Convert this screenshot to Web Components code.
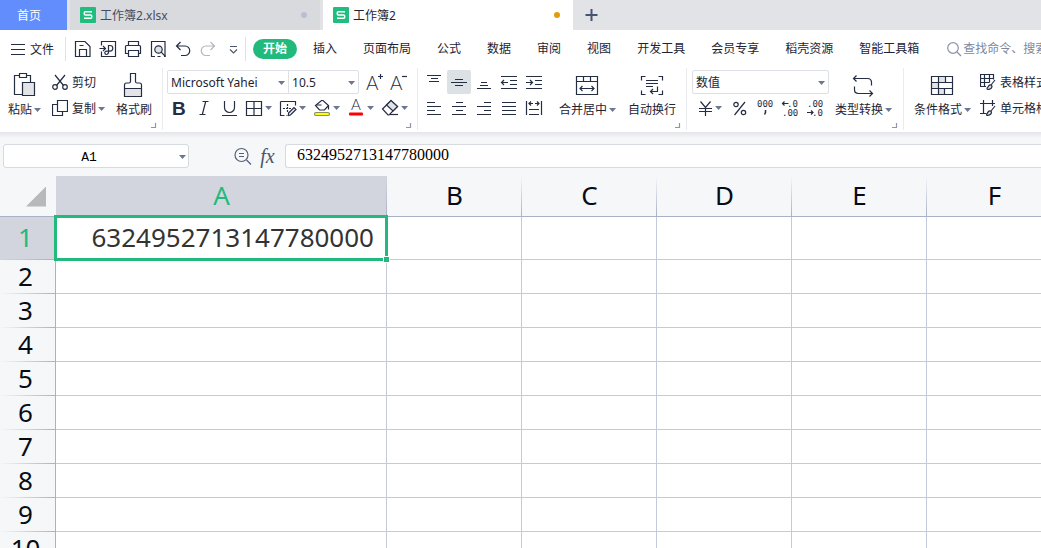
<!DOCTYPE html>
<html lang="zh-CN">
<head>
<meta charset="utf-8">
<title>工作簿2</title>
<style>
html, body { margin: 0; height: 100%; overflow: hidden; }
body {
  font: 12px/18px "Noto Sans", "Noto Sans CJK SC", sans-serif;
  color: #1d2433;
  --ink: #252d42;
  --caret: #6c7892;
  --green: #21ba7c;
}
</style>
</head>
<body>
<wps-app></wps-app>
<script>
/* Registers an element; setup fills in the cloned template before it goes live. */
const define = (name, html, setup) => {
  const template = document.createElement('template');
  template.innerHTML = html;
  customElements.define(name, class extends HTMLElement {
    connectedCallback() {
      if (this.shadowRoot) return;
      const content = template.content.cloneNode(true);
      if (setup) setup.call(this, content);
      this.attachShadow({ mode: 'open' }).append(content);
    }
  });
};

/* ---------- icons: 24px for small tools, 30px for large ones ---------- */
const ICONS = {
  menu: [16, '<path d="M1 3.5h14M1 8.5h14M1 13.5h14"/>'],
  save: [24, '<path d="M4.500 4.500h9.500l5 5v10h-14.500zM8.500 19v-6.500h7v6.500M8.500 8.500h4"/>'],
  pdf: [24, '<path d="M5.500 8.500v-4h14v15h-14v-5M3.500 11.500h6M7 9l2.500 2.500-2.500 2.500M12.500 16.500v-8h1.500a2.800 2.800 0 0 1 0 5.600h-3.500a1.700 1.700 0 1 0 1.700 1.700"/>'],
  print: [24, '<path d="M7.500 9v-4.500h10v4.500M7.500 16.500h-3v-7q0-1 1-1h13q1 0 1 1v7h-2M7.500 13.500h10v6h-10z"/>'],
  preview: [24, '<path d="M9 19.500h-3.500v-15h13.500v15h-1M14.500 19.500h-3"/><circle cx="12.500" cy="12.500" r="3.700" fill="#dfe2e8"/><path d="M15.200 15.200l4.300 4.300"/>'],
  undo: [24, '<path d="M9.500 5l-4 4 4 4M5.500 9h8.500a4.500 4.500 0 0 1 0 9.500h-4"/>'],
  redo: [24, '<path stroke="#b2b6be" d="M14.500 5l4 4-4 4M18.500 9h-8.500a4.500 4.500 0 0 0 0 9.500h4"/>'],
  more: [24, '<path stroke="#4e586c" d="M9 9.500h7M9 12.500l3.500 3.500 3.500-3.500"/>'],
  search: [16, '<g stroke="#8993aa"><circle cx="7" cy="7" r="5.300"/><path d="M11 11l4 4"/></g>'],
  plus: [24, '<path stroke="#46556f" stroke-width="2" d="M6.500 12h12M12.500 6v12"/>'],
  sheet: [16, '<rect width="16" height="16" rx="1" fill="#20bd7e" stroke="none"/><path stroke="#fff" stroke-width="1.500" d="M12 4.700h-6.700q-1 0-1 1v1.300q0 1 1 1h5.400q1 0 1 1v1.300q0 1-1 1h-6.700"/>'],
  cut: [16, '<path d="M3 1l8.500 10.500M13 1l-8.500 10.500"/><circle cx="3" cy="13" r="2.300"/><circle cx="13" cy="13" r="2.300"/>'],
  copy: [16, '<path d="M5.500 .5h10v11h-10zM5 4.500h-4.500v11h10v-4"/>'],
  paste: [30, '<path d="M10 5.500h-4.500v19h8M18 5.500h3.500v7M10.500 3.500h7v4h-7z"/><path fill="#e3e4e8" d="M13.500 12.500h12v13h-12z"/>'],
  brush: [30, '<path fill="#e3e4e8" stroke="none" d="M5.500 18.500h17v8h-17z"/><path d="M11.500 3.500h5v8q0 1.500 1.500 1.500h2.500q2 0 2 2v11.500h-17v-11.500q0-2 2-2h2.500q1.500 0 1.500-1.500zM5.500 18.500h17"/>'],
  grow: [24, '<text x="3" y="20" font-size="19" class="thin">A</text><path d="M15 6.500h5M17.500 4v5"/>'],
  shrink: [24, '<text x="3" y="20" font-size="19" class="thin">A</text><path d="M15 6.500h5"/>'],
  bold: [24, '<text x="5" y="19" font-size="19" font-weight="700">B</text>'],
  italic: [24, '<path d="M10.500 5.500h6M7.500 18.500h6M13.700 5.500l-3.400 13"/>'],
  underline: [24, '<path d="M5 19.500h15M7.500 5v6.500a5 5 0 0 0 10 0v-6.500"/>'],
  border: [24, '<path d="M4.500 5.500h15v14h-15zM12 5.500v14M4.500 12.500h15"/>'],
  drawborder: [24, '<path d="M4.500 5.500v14h4M4.500 5.500h15v4M10.500 19.500h1"/><path stroke-dasharray="2 1" d="M7 12.500h8M11.500 8v8"/><path fill="#e3e4e8" d="M12.500 19.500v-2.500l5.500-5.500 2 2-5.500 5.500z"/>'],
  fill: [24, '<path d="M5.500 9.500l6-5h1.500l5.500 5-4 4.500h-5z" fill="#fff"/><path d="M18.500 9.500v4M6.500 9h5"/><rect x="4.500" y="16.500" width="15" height="3" rx="1.500" fill="#ff0" stroke="#888f60"/>'],
  color: [24, '<text x="7" y="14" font-size="15" class="thin">A</text><rect x="5" y="16.500" width="14" height="3" rx="1" fill="#f00" stroke="none"/>'],
  eraser: [24, '<path d="M4.500 13l8.500-8.500 6.500 6-8.500 8.500h-1z"/><path fill="#e0e3e9" d="M8.500 9l4.500-4.500 6.500 6-4.500 4.500z"/><path d="M12 18.500h8"/>'],
  top: [24, '<path d="M5 5.500h14M9 8.500h7M7 11.500h10"/>'],
  middle: [24, '<path d="M8 9.500h8M4 12.500h16M8 15.500h8"/>'],
  bottom: [24, '<path d="M9 12.500h6M8 15.500h8M5 18.500h14"/>'],
  outdent: [24, '<path d="M4 6.500h16M13 10.500h7M13 14.500h7M4 18.500h16M5 12.500h6M7 10l-2.500 2.500 2.500 2.500"/>'],
  indent: [24, '<path d="M4 6.500h16M13 10.500h7M13 14.500h7M4 18.500h16M4 12.500h6M8 10l2.500 2.500-2.500 2.500"/>'],
  left: [24, '<path d="M5 6.500h8M5 10.500h14M5 14.500h8M5 18.500h14"/>'],
  center: [24, '<path d="M9 6.500h7M5 10.500h14M9 14.500h7M5 18.500h14"/>'],
  right: [24, '<path d="M12 6.500h7M5 10.500h14M12 14.500h7M5 18.500h14"/>'],
  justify: [24, '<path d="M5 6.500h14M5 10.500h14M5 14.500h14M5 18.500h14"/>'],
  spread: [24, '<path d="M4.500 5v14M19.500 5v14M7 13.500h10M7 18.500h10M7 7.500h4M13 7.500h4M9 5.500l-2 2 2 2M15 5.500l2 2-2 2"/>'],
  merge: [30, '<path d="M4.500 6.500h21v18h-21zM4.500 11.500h21M11.500 6.500v5M18.500 6.500v5M8 18.500h14M10.500 16l-2.500 2.500 2.500 2.500M19.500 16l2.500 2.500-2.500 2.500"/>'],
  wrap: [30, '<path d="M8.500 6.500h-4v4M21.500 6.500h4v4M8.500 24.500h-4v-4M21.500 24.500h4v-4M9 10.500h12M9 13.500h12M9 16.500h7M20.500 16.500v5h-7M16 19l-2.500 2.500 2.500 2.500"/>'],
  yen: [24, '<path d="M8.500 5.500l5 6 5-6M7 12.500h13M7 15.500h13M13.500 12v8"/>'],
  percent: [24, '<circle cx="8" cy="8.500" r="2.200"/><circle cx="15.500" cy="16.500" r="2.200"/><path d="M17 6l-10.500 13"/>'],
  comma: [24, '<text x="4" y="11" font-size="9" class="mono">000</text><path stroke-width="1.500" d="M12.500 14v2.500l-1 2"/>'],
  decinc: [24, '<path d="M4.500 7.500h6M6.500 5.500l-2 2 2 2"/><text x="9" y="11" font-size="9" class="mono">.0</text><text x="4" y="20" font-size="9" class="mono">.00</text>'],
  decdec: [24, '<text x="4" y="11" font-size="9" class="mono">.00</text><path d="M4 16.500h6M8 14.500l2 2-2 2"/><text x="9" y="20" font-size="9" class="mono">.0</text>'],
  convert: [30, '<path d="M8.500 5.500l-3 3 3 3M5.500 8.500h14q4 0 4 4v3M21.500 20.500l3 3-3 3M24.500 23.500h-14q-4 0-4-4v-3"/>'],
  cond: [30, '<path fill="#e3e4e8" stroke="none" d="M11.500 6.500h7v6h-7zM5 12.500h6v6h-6zM11 18.500h6v6h-6z"/><path d="M4.500 6.500h21v18h-21zM4.500 12.500h21M4.500 18.500h21M11.500 6.500v18M18.500 6.500v6M17.500 18.500v6"/>'],
  tstyle: [16, '<path d="M6 12.500h-5.500v-12h13v5M.5 4.500h13M.5 8.500h9M4.500 .5v12M9.500 .5v8"/><path fill="#dfe2e8" d="M8 15.500q-2-1 0-2.500 1-2.500 3-2l1 1q0 3-4 3.500zM11 11l4-5"/>'],
  cstyle: [16, '<path d="M0 3.500h15M3.500 0v13.500M0 13.500h6M12.500 0v6"/><path fill="#dfe2e8" d="M7 15.500q-1-1 .5-2.500 1-2.500 3-2l1 1q0 3-4.500 3.500zM11 11l4-5"/>'],
  lens: [24, '<g stroke="#556079"><circle cx="10.500" cy="11" r="6.500"/><path d="M15.500 16l4.500 4.500M8 9.500h5M8 12.500h5"/></g>'],
  corner: [6, '<path stroke="#8c96ad" d="M0 4.500h4.500v-4.500"/>']
};
define('wps-icon', `<style>
:host { display: block; flex: none; color: var(--ink); }
svg { display: block; fill: none; stroke: currentColor; stroke-width: 1.2; }
text { fill: currentColor; stroke: none; font-family: "Liberation Sans", sans-serif; }
.thin { font-family: Lato, sans-serif; font-weight: 300; }
.mono { font-family: "DejaVu Sans Mono", monospace; }
</style><svg aria-hidden="true"></svg>`, function (content) {
  const [size, body] = ICONS[this.getAttribute('name')];
  const svg = content.querySelector('svg');
  svg.setAttribute('width', size);
  svg.setAttribute('height', size);
  svg.setAttribute('viewBox', `0 0 ${size} ${size}`);
  svg.innerHTML = body;
});

define('wps-caret', `<style>
:host { display: block; flex: none; width: 7px; height: 4px; margin: 0 -1px; background: var(--caret); clip-path: polygon(0 0, 100% 0, 50% 100%); }
</style>`);

/* ---------- buttons ---------- */
define('wps-tool', `<style>
:host { display: block; flex: none; }
button { display: flex; align-items: center; height: 24px; padding: 0; border: 0; border-radius: 2px; background: none; color: inherit; font: inherit; }
:host([split]) button { padding-right: 4px; }
:host([pressed]) button { background: #dce1e6; }
</style>
<button type="button"><wps-icon></wps-icon></button>`, function (content) {
  const button = content.querySelector('button');
  content.querySelector('wps-icon').setAttribute('name', this.getAttribute('icon'));
  button.setAttribute('aria-label', this.getAttribute('label'));
  if (this.hasAttribute('split')) button.append(document.createElement('wps-caret'));
});
const labelled = function (content) {
  content.querySelector('wps-icon').setAttribute('name', this.getAttribute('icon'));
  if (this.hasAttribute('split')) content.querySelector('span').append(document.createElement('wps-caret'));
};
define('wps-row-button', `<style>
:host { display: block; flex: none; }
button { display: flex; align-items: center; gap: 4px; height: 24px; padding: 0; border: 0; background: none; color: inherit; font: inherit; white-space: nowrap; }
span { display: flex; align-items: center; gap: 3px; padding-top: 2px; }
</style>
<button type="button"><wps-icon></wps-icon><span><slot></slot></span></button>`, labelled);
define('wps-big-button', `<style>
:host { display: block; flex: none; }
button { display: flex; flex-direction: column; align-items: center; padding: 0; border: 0; background: none; color: inherit; font: inherit; white-space: nowrap; }
span { display: flex; align-items: center; gap: 3px; padding-top: 1px; }
</style>
<button type="button"><wps-icon></wps-icon><span><slot></slot></span></button>`, labelled);

define('wps-select', `<style>
:host { display: block; position: relative; }
select { appearance: none; display: block; width: 100%; height: 22px; padding: 1px 12px 0 3px; border: 0; background: none; color: inherit; font: inherit; }
wps-caret { position: absolute; right: 4px; top: 10px; pointer-events: none; }
</style>
<select></select><wps-caret></wps-caret>`, function (content) {
  const select = content.querySelector('select');
  select.setAttribute('aria-label', this.getAttribute('label'));
  select.add(new Option(this.getAttribute('value')));
});

/* ---------- document tabs ---------- */
define('wps-tab', `<style>
:host { display: flex; align-items: center; flex: 0 1 250px; min-width: 0; background: #d9dade; color: #454d5c; --dot: #b7c0d3; }
:host([active]) { background: #fff; color: #1d2433; --dot: #e39a0b; }
button { display: flex; flex: 1; align-items: center; gap: 4px; height: 30px; padding: 0 13px 0 10px; border: 0; background: none; color: inherit; font: inherit; }
span { padding-top: 2px; }
i { width: 6px; height: 6px; margin-left: auto; border-radius: 50%; background: var(--dot); }
</style>
<button type="button" role="tab"><wps-icon name="sheet"></wps-icon><span><slot></slot></span><i></i></button>`);
define('wps-tabs', `<style>
:host { display: flex; gap: 3px; height: 30px; background: #e2e3e7; }
.home { padding: 2px 26px 0 17px; border: 0; background: #618dfd; color: #fff; font: inherit; }
wps-tool { padding: 3px; }
</style>
<button class="home" type="button">首页</button>
<wps-tab>工作簿2.xlsx</wps-tab>
<wps-tab active>工作簿2</wps-tab>
<wps-tool icon="plus" label="新建"></wps-tool>`);

/* ---------- menu bar ---------- */
define('wps-menubar', `<style>
:host { display: flex; align-items: center; height: 37px; padding-left: 10px; background: #fff; overflow: hidden; }
.quick { display: flex; gap: 1px; padding: 0 0 0 5px; border-left: 1px solid #dfe1e6; border-right: 1px solid #dfe1e6; margin-left: 11px; }
nav { display: flex; flex: none; align-items: center; gap: 26px; padding: 1px 0 0 17px; }
a { color: inherit; text-decoration: none; white-space: nowrap; }
a.on { margin: 0 -10px; padding: 1px 10px; border-radius: 10px; background: var(--green); color: #fff; font-weight: 700; }
label { display: flex; flex: 1; align-items: center; gap: 1px; min-width: 0; margin-left: 27px; }
input { flex: 1; min-width: 0; height: 18px; padding: 0; border: 0; outline: 0; background: none; font: inherit; color: inherit; }
input::placeholder { color: #7c879f; opacity: 1; }
</style>
<wps-row-button icon="menu">文件</wps-row-button>
<div class="quick">
<wps-tool icon="save" label="保存"></wps-tool><wps-tool icon="pdf" label="输出为PDF"></wps-tool><wps-tool icon="print" label="打印"></wps-tool><wps-tool icon="preview" label="打印预览"></wps-tool><wps-tool icon="undo" label="撤销"></wps-tool><wps-tool icon="redo" label="恢复"></wps-tool><wps-tool icon="more" label="更多"></wps-tool>
</div>
<nav>
<a class="on" href="#start">开始</a><a href="#insert">插入</a><a href="#layout">页面布局</a><a href="#formula">公式</a><a href="#data">数据</a><a href="#review">审阅</a><a href="#view">视图</a><a href="#dev">开发工具</a><a href="#member">会员专享</a><a href="#docer">稻壳资源</a><a href="#tools">智能工具箱</a>
</nav>
<label><wps-icon name="search"></wps-icon><input type="text" aria-label="查找命令" placeholder="查找命令、搜索模板"></label>`);

/* ---------- ribbon ---------- */
define('wps-group', `<style>
:host { display: flex; flex: none; position: relative; height: 58px; padding-top: 2px; padding-bottom: 2px; border-right: 1px solid #e9ebee; }
:host(:last-of-type) { border: 0; }
.corner { display: none; position: absolute; right: 5px; bottom: 1px; }
:host([launcher]) .corner { display: block; }
</style><slot></slot><wps-icon class="corner" name="corner"></wps-icon>`);
define('wps-ribbon', `<style>
:host { display: flex; padding: 1px 0 2px; background: #fff; overflow: hidden; }
.col { display: flex; flex-direction: column; gap: 2px; }
.row { display: flex; gap: 1px; }
.clip { padding-left: 8px; padding-right: 10px; gap: 12px; }
.font { padding-left: 4px; padding-right: 6px; }
.align { padding-left: 4px; padding-right: 10px; gap: 13px; }
.num { padding-left: 5px; padding-right: 12px; gap: 6px; }
.style { padding-left: 10px; gap: 10px; }
.combo { display: flex; box-sizing: border-box; height: 24px; border: 1px solid #dde0e5; border-radius: 2px; background: #fff; }
.face { width: 120px; border-right: 1px solid #dde0e5; }
.size { width: 69px; }
.sized { gap: 0; }
.sized .combo { margin-right: 4px; }
.fmt { width: 135px; }
.spread { padding-right: 2px; }
.spread > :first-child { margin-right: auto; }
</style>
<wps-group class="clip" launcher>
  <wps-big-button icon="paste" split>粘贴</wps-big-button>
  <div class="col"><wps-row-button icon="cut">剪切</wps-row-button><wps-row-button icon="copy" split>复制</wps-row-button></div>
  <wps-big-button icon="brush">格式刷</wps-big-button>
</wps-group>
<wps-group class="font" launcher>
  <div class="col">
    <div class="row sized">
      <div class="combo"><wps-select class="face" label="字体" value="Microsoft Yahei"></wps-select><wps-select class="size" label="字号" value="10.5"></wps-select></div>
      <wps-tool icon="grow" label="增大字号"></wps-tool><wps-tool icon="shrink" label="减小字号"></wps-tool>
    </div>
    <div class="row">
      <wps-tool icon="bold" label="加粗"></wps-tool><wps-tool icon="italic" label="倾斜"></wps-tool><wps-tool icon="underline" label="下划线"></wps-tool><wps-tool icon="border" label="边框" split></wps-tool><wps-tool icon="drawborder" label="绘图边框" split></wps-tool><wps-tool icon="fill" label="填充颜色" split></wps-tool><wps-tool icon="color" label="字体颜色" split></wps-tool><wps-tool icon="eraser" label="清除" split></wps-tool>
    </div>
  </div>
</wps-group>
<wps-group class="align" launcher>
  <div class="col">
    <div class="row"><wps-tool icon="top" label="顶端对齐"></wps-tool><wps-tool icon="middle" label="垂直居中" pressed></wps-tool><wps-tool icon="bottom" label="底端对齐"></wps-tool><wps-tool icon="outdent" label="减少缩进量"></wps-tool><wps-tool icon="indent" label="增加缩进量"></wps-tool></div>
    <div class="row"><wps-tool icon="left" label="左对齐"></wps-tool><wps-tool icon="center" label="水平居中"></wps-tool><wps-tool icon="right" label="右对齐"></wps-tool><wps-tool icon="justify" label="两端对齐"></wps-tool><wps-tool icon="spread" label="分散对齐"></wps-tool></div>
  </div>
  <wps-big-button icon="merge" split>合并居中</wps-big-button>
  <wps-big-button icon="wrap">自动换行</wps-big-button>
</wps-group>
<wps-group class="num" launcher>
  <div class="col">
    <div class="combo"><wps-select class="fmt" label="数字格式" value="数值"></wps-select></div>
    <div class="row spread"><wps-tool icon="yen" label="货币" split></wps-tool><wps-tool icon="percent" label="百分比"></wps-tool><wps-tool icon="comma" label="千位分隔"></wps-tool><wps-tool icon="decinc" label="增加小数位"></wps-tool><wps-tool icon="decdec" label="减少小数位"></wps-tool></div>
  </div>
  <wps-big-button icon="convert" split>类型转换</wps-big-button>
</wps-group>
<wps-group class="style">
  <wps-big-button icon="cond" split>条件格式</wps-big-button>
  <div class="col"><wps-row-button icon="tstyle" split>表格样式</wps-row-button><wps-row-button icon="cstyle" split>单元格格式</wps-row-button></div>
</wps-group>`);

/* ---------- formula bar ---------- */
define('wps-formula', `<style>
:host { display: flex; padding: 12px 0 8px 3px; background: linear-gradient(#e3e5e8, #f5f7f9 6px); }
input { box-sizing: border-box; height: 24px; border: 1px solid #d7dadf; border-radius: 3px; background: #fff; color: #000; outline: 0; }
.name { position: relative; width: 186px; margin-right: 42px; }
.name input { width: 100%; padding: 2px 26px 0 12px; font: 13px/18px "Liberation Mono", monospace; text-align: center; }
.name wps-caret { position: absolute; right: 4px; top: 11px; }
.value { flex: 1; min-width: 0; margin-left: 5px; padding: 0 11px 2px; border-right: 0; border-radius: 3px 0 0 3px; font: 16px/20px "Liberation Serif", serif; }
.fx { width: 25px; padding: 0; border: 0; background: none; color: #4b556b; font: italic 20px/24px "Liberation Serif", serif; }
</style>
<div class="name"><input type="text" aria-label="名称框" value="A1"><wps-caret></wps-caret></div>
<wps-tool icon="lens" label="浏览公式结果"></wps-tool>
<button class="fx" type="button">fx</button>
<input class="value" type="text" aria-label="编辑栏" value="6324952713147780000">`);

/* ---------- worksheet: adds as many rows and columns as the window shows ---------- */
define('wps-sheet', `<style>
:host { display: block; flex: 1; min-height: 0; overflow: hidden; background: #fff; }
table { width: max-content; table-layout: fixed; border-collapse: separate; border-spacing: 0; font-size: 26px; line-height: 30px; }
th, td { box-sizing: border-box; height: 34px; padding: 0 0 2px; border: solid #c3cada; border-width: 0 1px 1px 0; }
th { font-weight: 400; color: #070b16; background-color: #f5f7f9; }
thead th { height: 41px; border-color: #a9b1c9; border-right: 0; width: 135px; background-image: linear-gradient(#a9b1c900, #a9b1c9); background-size: 1px 100%; background-position: right; background-repeat: no-repeat; }
tbody th { padding: 0 4px 3px 0; border-color: #a9b1c9; border-bottom: 0; background-image: linear-gradient(90deg, #a9b1c900, #a9b1c9); background-size: 100% 1px; background-position: bottom; background-repeat: no-repeat; }
thead th:nth-child(1) { width: 56px; background-image: none; }
thead th:nth-child(2) { width: 331px; }
thead th.on, tbody th.on { background-color: #d2d5dd; color: var(--green); }
tbody tr:first-child > * { height: 43px; }
.all { width: 20px; height: 20px; margin: 3px 10px 0 auto; background: #b9b9b9; clip-path: polygon(100% 0, 100% 100%, 0 100%); }
td.sel { position: relative; padding-right: 12px; text-align: right; color: #333; }
.box { position: absolute; inset: -2px; border: 3px solid var(--green); pointer-events: none; }
.box::after { content: ""; position: absolute; right: -5px; bottom: -5px; width: 5px; height: 5px; border: 1px solid #fff; background: var(--green); }
</style><table aria-label="工作表"><thead></thead><tbody></tbody></table>`, function (content) {
  const head = content.querySelector('thead');
  const body = content.querySelector('tbody');
  const draw = () => {
    const cols = Math.max(2, 1 + Math.ceil((innerWidth - 387) / 135));
    const rows = Math.max(2, 1 + Math.ceil((innerHeight - 260) / 34));
    const letters = Array.from({ length: Math.min(cols, 26) }, (_, i) => String.fromCharCode(65 + i));
    head.innerHTML = '<tr><th><div class="all"></div></th>' +
      letters.map((c, i) => `<th scope="col"${i ? '' : ' class="on"'}>${c}</th>`).join('') + '</tr>';
    body.innerHTML = Array.from({ length: rows }, (_, r) =>
      `<tr><th scope="row"${r ? '' : ' class="on"'}>${r + 1}</th>` +
      letters.map((c, i) => r || i ? '<td></td>' : '<td class="sel">6324952713147780000<div class="box"></div></td>').join('') + '</tr>').join('');
  };
  draw();
  addEventListener('resize', draw);
});

define('wps-app', `<style>
:host { display: flex; flex-direction: column; height: 100vh; overflow: hidden; }
</style>
<wps-tabs></wps-tabs><wps-menubar></wps-menubar><wps-ribbon></wps-ribbon><wps-formula></wps-formula><wps-sheet></wps-sheet>`);
</script>
</body>
</html>
